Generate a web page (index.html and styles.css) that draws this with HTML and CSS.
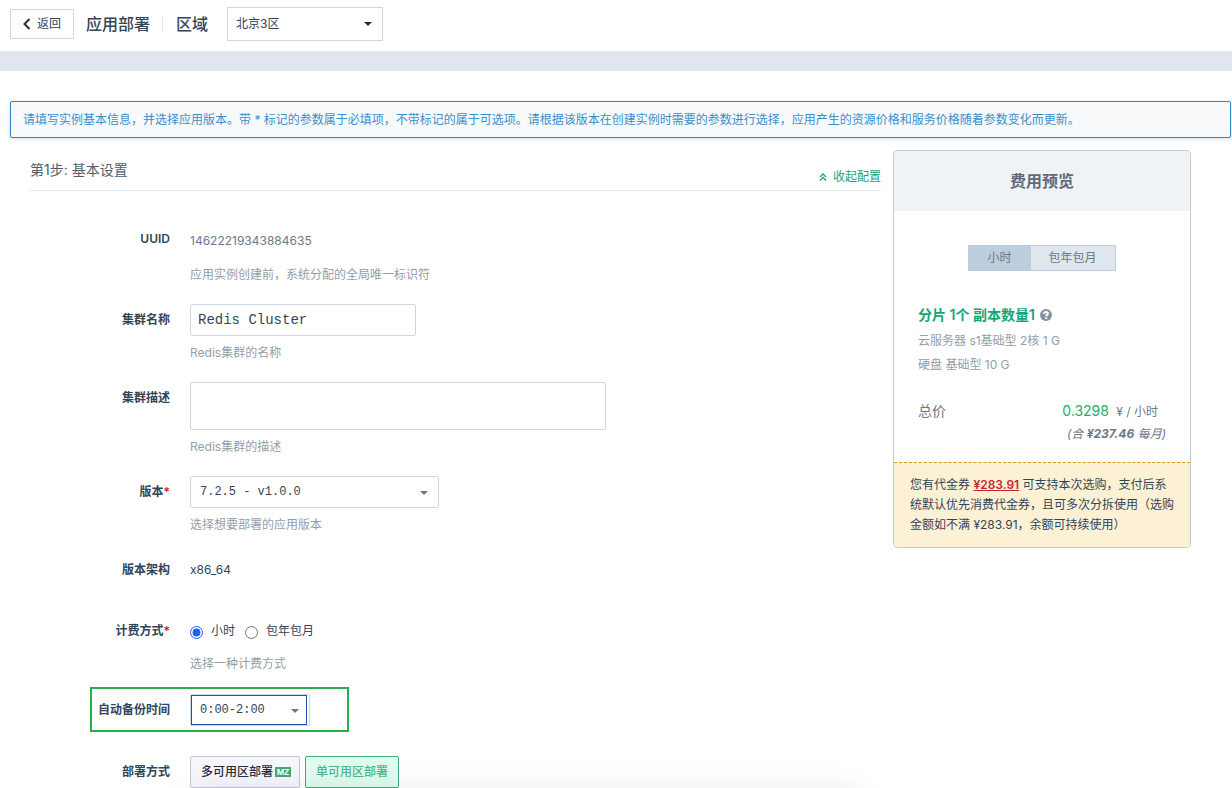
FILE: index.html
```html
<!DOCTYPE html>
<html lang="zh-CN">
<head>
<meta charset="utf-8">
<title>应用部署</title>
<link rel="stylesheet" href="styles.css">
</head>
<body>
<header class="topbar">
  <button class="back" type="button">
    <svg class="back-icon" viewBox="0 0 8 12" aria-hidden="true"><path d="M6.500 1 1.500 6l5 5"/></svg>
    返回
  </button>
  <h1 class="title">应用部署</h1>
  <label class="region-label" for="region">区域</label>
  <span class="select region">
    <select id="region"><option>北京3区</option></select>
  </span>
</header>
<div class="band"></div>
<p class="notice">请填写实例基本信息，并选择应用版本。带 * 标记的参数属于必填项，不带标记的属于可选项。请根据该版本在创建实例时需要的参数进行选择，应用产生的资源价格和服务价格随着参数变化而更新。</p>

<div class="content">
  <main class="main">
    <div class="step">
      <h2 class="step-title">第1步: 基本设置</h2>
      <a class="collapse" href="#settings">
        <svg class="collapse-icon" viewBox="0 0 8 8" aria-hidden="true"><path d="M1 4 4 1l3 3M1 7.500l3-3 3 3"/></svg>
        收起配置
      </a>
    </div>
    <form class="form" id="settings">
      <div class="row uuid-row">
        <span class="label">UUID</span>
        <div class="field">
          <div class="value muted">14622219343884635</div>
          <p class="help">应用实例创建前，系统分配的全局唯一标识符</p>
        </div>
      </div>
      <div class="row">
        <label class="label" for="name">集群名称</label>
        <div class="field">
          <input class="text" id="name" type="text" value="Redis Cluster">
          <p class="help">Redis集群的名称</p>
        </div>
      </div>
      <div class="row">
        <label class="label" for="desc">集群描述</label>
        <div class="field">
          <textarea class="area" id="desc"></textarea>
          <p class="help">Redis集群的描述</p>
        </div>
      </div>
      <div class="row">
        <label class="label" for="version">版本<span class="required">*</span></label>
        <div class="field">
          <span class="select version">
            <select id="version"><option>7.2.5 - v1.0.0</option></select>
          </span>
          <p class="help">选择想要部署的应用版本</p>
        </div>
      </div>
      <div class="row arch-row">
        <span class="label">版本架构</span>
        <div class="field"><div class="value">x86_64</div></div>
      </div>
      <div class="row" role="radiogroup" aria-labelledby="billing">
        <span class="label" id="billing">计费方式<span class="required">*</span></span>
        <div class="field">
          <div class="radios">
            <input class="radio" type="radio" name="billing" id="hourly" checked>
            <label for="hourly">小时</label>
            <input class="radio" type="radio" name="billing" id="monthly">
            <label for="monthly">包年包月</label>
          </div>
          <p class="help">选择一种计费方式</p>
        </div>
      </div>
      <div class="row backup-row">
        <label class="label" for="backup">自动备份时间</label>
        <div class="field">
          <span class="select backup">
            <select id="backup"><option>0:00-2:00</option></select>
          </span>
        </div>
      </div>
      <div class="row">
        <span class="label">部署方式</span>
        <div class="field modes">
          <button class="mode multi" type="button">多可用区部署<span class="mz">MZ</span></button>
          <button class="mode active" type="button">单可用区部署</button>
        </div>
      </div>
    </form>
  </main>

  <aside class="card">
    <h2 class="card-title">费用预览</h2>
    <div class="card-body">
      <div class="tabs">
        <button class="tab selected" type="button">小时</button>
        <button class="tab" type="button">包年包月</button>
      </div>
      <h3 class="spec-title">分片 1个 副本数量1
        <svg class="help-icon" viewBox="0 0 12 12" aria-hidden="true"><circle cx="6" cy="6" r="6"/><path d="M4.100 4.700c0-2.400 3.800-2.300 3.800-.1C7.900 5.900 6.200 5.800 6.200 7.200M6.200 8.200v1.500"/></svg>
      </h3>
      <p class="spec">云服务器 s1基础型 2核 1 G</p>
      <p class="spec">硬盘 基础型 10 G</p>
      <div class="total">
        <span class="total-label">总价</span>
        <span class="total-price"><span class="amount">0.3298</span> ¥ / 小时</span>
      </div>
      <p class="monthly">(合 <b>¥237.46</b> 每月)</p>
    </div>
    <p class="coupon">您有代金券 <a class="coupon-link" href="#coupon">¥283.91</a> 可支持本次选购，支付后系统默认优先消费代金券，且可多次分拆使用（选购金额如不满 ¥283.91，余额可持续使用）</p>
  </aside>
</div>
<div class="footer-bar"></div>
</body>
</html>
```
FILE: styles.css
```css
* { box-sizing: border-box; }
body {
  margin: 0;
  background: #fff;
  color: #324558;
  font: 12px/20px Inter, "Noto Sans CJK SC", sans-serif;
}
h1, h2, h3, p { margin: 0; font-weight: 400; }
button, input, select, textarea { font: inherit; color: inherit; }

.topbar {
  display: flex;
  align-items: center;
  height: 51px;
  padding: 0 10px 4px;
}
.back {
  display: flex;
  align-items: center;
  gap: 6px;
  height: 30px;
  padding: 0 12px;
  border: 1px solid #cfd9e4;
  background: #fff;
}
.back-icon {
  width: 8px;
  height: 12px;
  fill: none;
  stroke: #252f3a;
  stroke-width: 2;
}
.title, .region-label {
  color: #324558;
  font-size: 16px;
  font-weight: 500;
  line-height: 16px;
}
.title {
  margin-left: 12px;
  padding-right: 12px;
  border-right: 1px solid #dfe6ed;
}
.region-label { margin: 0 19px 0 13px; }

.select { position: relative; display: block; }
.select select {
  display: block;
  width: 100%;
  height: 100%;
  padding: 0 9px;
  border: 1px solid #cad7e5;
  border-radius: 2px;
  background: #fff;
  appearance: none;
  outline: none;
  font-family: "Liberation Mono", monospace;
}
.select::after {
  content: "";
  position: absolute;
  top: 50%;
  right: 11px;
  margin-top: -1px;
  border: 4px solid transparent;
  border-top-color: #6b798a;
  border-bottom: 0;
  pointer-events: none;
}
.region { width: 156px; height: 34px; }
.select.region select {
  padding: 0 8px;
  border-radius: 0;
  font-family: inherit;
}
.region::after { margin-top: -2px; border-top-color: #252f3a; }
.version { width: 249px; height: 32px; }

.band { height: 20px; background: #dfe6ed; }
.notice {
  margin: 30px 1px 0 10px;
  padding: 8px 12px 7px;
  border: 1px solid #2c86c7;
  border-radius: 2px;
  background: #f7f9fb;
  color: #3a8fcb;
  box-shadow: 0 1px 4px rgba(50, 69, 88, .18);
}

.content {
  display: flex;
  align-items: flex-start;
  gap: 12px;
  padding: 12px 41px 0 30px;
}
.main { flex: 1; min-width: 0; }
.step {
  display: flex;
  justify-content: space-between;
  height: 41px;
  border-bottom: 1px solid #dfe6ed;
}
.step-title { font-size: 14px; line-height: 40px; color: #4c5e70; }
.collapse {
  display: flex;
  align-items: center;
  gap: 6px;
  padding-top: 14px;
  color: #15a675;
  text-decoration: none;
}
.collapse-icon {
  width: 8px;
  height: 8px;
  fill: none;
  stroke: #15a675;
  stroke-width: 1.3;
}

.form { padding-top: 33px; }
.row {
  display: grid;
  grid-template-columns: 140px 1fr;
  column-gap: 20px;
  margin-bottom: 19px;
}
.row:last-child { margin-bottom: 0; }
.label {
  line-height: 32px;
  text-align: right;
  font-weight: 600;
}
.uuid-row .label { line-height: 30px; }
.required { color: #c7252f; }
.value { line-height: 32px; }
.muted { color: #6b798a; }
.uuid-row .value { line-height: 34px; }
.help { margin-top: 7px; color: #939ea9; }
.arch-row { min-height: 42px; }
.text, .area {
  display: block;
  border: 1px solid #cad7e5;
  border-radius: 2px;
  background: #fff;
  font-family: "Liberation Mono", monospace;
  font-size: 14px;
  outline: none;
}
.text { width: 226px; height: 32px; padding: 0 7px; }
.area { width: 416px; max-width: 100%; height: 48px; padding: 6px; resize: none; }

.radios {
  display: flex;
  align-items: center;
  height: 32px;
}
.radio { width: 13px; height: 13px; margin: 3px 8px 0 0; accent-color: #1f5ffb; }
.radios label + .radio { margin-left: 10px; }

.backup-row {
  grid-template-columns: 78px 1fr;
  width: 259px;
  margin: -6px 0 24px 60px;
  padding: 5px 0 4px;
  border: 2px solid #27ae4c;
}
.backup-row .label { white-space: nowrap; }
.backup {
  width: 120px;
  height: 32px;
  padding-right: 2px;
  border: 1px solid #cad7e5;
  border-radius: 2px;
}
.backup select { padding: 0 8px; border-color: #2450b5; border-radius: 0; }
.backup::after { right: 10px; }

.modes { display: flex; gap: 5px; }
.mode {
  display: flex;
  align-items: center;
  gap: 2px;
  height: 32px;
  padding: 0 10px;
  border: 1px solid #c4c6d6;
  border-radius: 2px;
  background: #f5f6fb;
  color: #252f3a;
  font-weight: 500;
  white-space: nowrap;
}
.mode.multi { padding-right: 8px; }
.mode.active { border-color: #3fae78; background: #e0fcf1; color: #4fb685; }
.mz {
  width: 16px;
  background: #42aa76;
  color: #fff;
  font-size: 8px;
  font-weight: 700;
  line-height: 10px;
  text-align: center;
}

.card {
  width: 298px;
  border: 1px solid #c2c9d3;
  border-radius: 4px;
  overflow: hidden;
}
.card-title {
  background: #eff3f6;
  color: #5f6b7b;
  font-size: 16px;
  font-weight: 600;
  line-height: 60px;
  text-align: center;
}
.card-body { padding: 34px 24px 18px; color: #6b798a; }
.tabs { display: flex; justify-content: center; margin-bottom: 32px; }
.tab {
  height: 26px;
  padding: 0 18px;
  border: 1px solid #bccddd;
  border-left: 0;
  background: #dfe6ed;
}
.tab.selected { border-left: 1px solid #bccddd; background: #bccddd; }
.spec-title {
  display: flex;
  align-items: center;
  gap: 5px;
  height: 24px;
  margin-bottom: 2px;
  color: #15a675;
  font-size: 14px;
  font-weight: 600;
}
.help-icon { width: 12px; height: 12px; fill: #8792a2; }
.help-icon path { fill: none; stroke: #fff; stroke-width: 2; }
.spec { color: #939ea9; line-height: 24px; }
.total {
  display: flex;
  justify-content: space-between;
  margin-top: 24px;
  padding-right: 8px;
}
.total-label { font-size: 14px; }
.amount { margin-right: 4px; color: #1cb067; font-size: 14px; }
.monthly { margin-top: 2px; font-style: italic; text-align: right; }
.coupon {
  padding: 12px 16px;
  border-top: 1px dashed #d6a010;
  background: #fcf1d5;
}
.coupon-link { color: #c7252f; font-weight: 600; }

.footer-bar {
  position: fixed;
  right: 372px;
  bottom: -60px;
  left: 190px;
  height: 60px;
  box-shadow: 0 0 30px rgba(0, 0, 0, .08);
  pointer-events: none;
}
```
